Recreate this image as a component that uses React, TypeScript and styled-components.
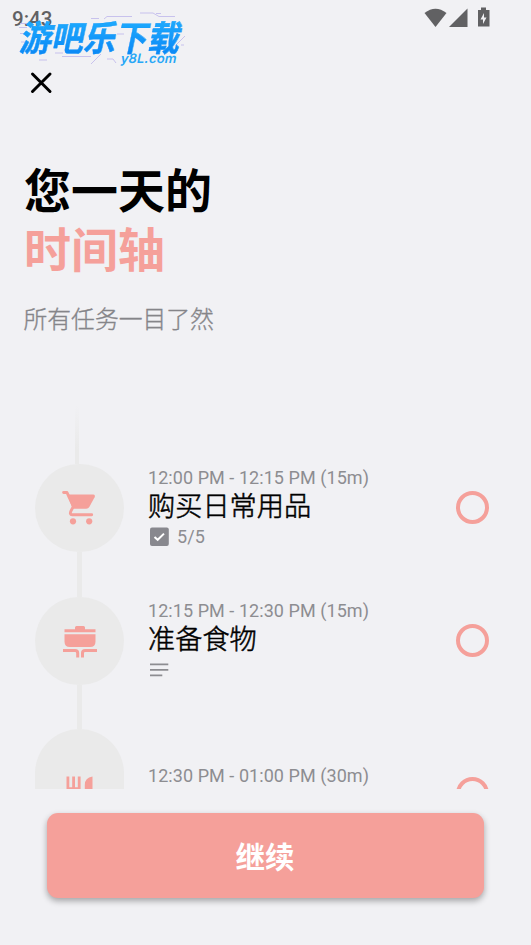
import React from "react";
import styled, { createGlobalStyle } from "styled-components";

const CORAL = "#f5a09a";
const GREY = "#8d8d91";
const DISC = "#eaeaea";

const GlobalStyle = createGlobalStyle`
  * { box-sizing: border-box; }
  body {
    margin: 0;
    background: #f1f1f4;
    font-family: Roboto, "Noto Sans CJK SC", sans-serif;
  }
`;

const Screen = styled.main`
  position: relative;
  display: flex;
  flex-direction: column;
  width: 531px;
  height: 945px;
  overflow: hidden;
  background: #f1f1f4;
`;

const StatusBar = styled.header`
  display: flex;
  justify-content: space-between;
  height: 40px;
  padding: 7px 41px 0 12px;
  color: #616163;
`;

const Clock = styled.span`
  font-size: 20.5px;
  line-height: 24px;
  font-weight: 500;
`;

const StatusIcons = styled.svg`
  width: 66px;
  height: 22px;
`;

const Watermark = styled.div`
  position: absolute;
  left: 15px;
  top: 8px;
  width: 175px;
  height: 60px;
`;

const Traces = styled.svg`
  position: absolute;
  inset: 0;
  width: 175px;
  height: 60px;
`;

const BrandName = styled.span`
  position: absolute;
  left: 7px;
  top: 9px;
  font: 700 32px/38px "Noto Sans CJK SC", sans-serif;
  white-space: nowrap;
  color: transparent;
  background: linear-gradient(#20b0ff, #0a86f5);
  background-clip: text;
  -webkit-text-stroke: 0.3px #1498fa;
  transform: skewX(-12deg) scaleY(1.1);
`;

const BrandSite = styled.span`
  position: absolute;
  left: 106px;
  top: 42px;
  font: 600 13px/16px Inter, sans-serif;
  letter-spacing: 0.2px;
  color: #27a7f7;
  transform: skewX(-12deg);
`;

const CloseButton = styled.button`
  width: 24px;
  height: 24px;
  margin: 31px 0 0 29px;
  padding: 0;
  border: 0;
  background: none;
  svg { display: block; }
`;

const Heading = styled.h1`
  margin: 68px 0 0 24px;
  font-size: 47px;
  line-height: 58.5px;
  font-weight: 700;
  color: #000;
`;

const Accent = styled.span`
  display: block;
  color: ${CORAL};
`;

const Subtitle = styled.p`
  margin: 23px 0 0 23.5px;
  font-size: 23.8px;
  line-height: 34px;
  font-weight: 300;
  color: #858589;
  -webkit-text-stroke: 0.35px #858589;
`;

const Timeline = styled.section`
  height: 384px;
  margin-top: 68px;
  padding: 0 42.5px 0 35px;
  overflow: hidden;
`;

const LeadLine = styled.div`
  width: 4px;
  height: 58.7px;
  margin-left: 40px;
  background: linear-gradient(rgba(234, 234, 234, 0), ${DISC} 75%);
`;

const Entry = styled.article<{ $tall?: boolean }>`
  display: flex;
  height: ${(p) => (p.$tall ? 172 : 132.85)}px;
`;

const Rail = styled.div`
  display: flex;
  flex-direction: column;
  align-items: center;
  width: 89px;
  margin-right: 24px;
`;

const Disc = styled.div<{ $tall?: boolean }>`
  display: flex;
  flex: none;
  align-items: center;
  justify-content: center;
  width: 89px;
  height: ${(p) => (p.$tall ? 128 : 88.6)}px;
  border-radius: 44.5px;
  background: ${DISC};
`;

const Connector = styled.div`
  flex: 1;
  width: 4.5px;
  background: ${DISC};
`;

const Details = styled.div<{ $tall?: boolean }>`
  flex: 1;
  padding-top: ${(p) => (p.$tall ? 36 : 3)}px;
`;

const Time = styled.div`
  font-size: 18px;
  line-height: 22px;
  letter-spacing: 0.06px;
  color: ${GREY};
`;

const TaskName = styled.div`
  margin-top: 1px;
  font-size: 27.2px;
  line-height: 34px;
  font-weight: 300;
  color: #000;
  -webkit-text-stroke: 0.5px #000;
`;

const Meta = styled.div`
  display: flex;
  align-items: center;
  gap: 8px;
  height: 26px;
  font-size: 18px;
  letter-spacing: 0.1px;
  color: ${GREY};
`;

const Ring = styled.div<{ $tall?: boolean }>`
  width: 33px;
  height: 33px;
  margin-top: ${(p) => (p.$tall ? 47.2 : 27.7)}px;
  border: 4px solid ${CORAL};
  border-radius: 50%;
`;

const ContinueButton = styled.button`
  width: 437px;
  height: 85px;
  margin: 24px 0 0 47px;
  padding: 0 1px 0 0;
  border: 0;
  border-radius: 11px;
  background: ${CORAL};
  color: #fff;
  font: 700 29.5px/85px "Noto Sans CJK SC", sans-serif;
  box-shadow: 0 3px 6px rgba(0, 0, 0, 0.32);
`;

const CartIcon = () => (
  <svg width="36" height="36" viewBox="1.3 0.7 36 36" fill={CORAL}>
    <path d="M2.9 3.2H6.3L8.5 8L12.7 17L10.2 21.8Q8.7 25.3 11.5 25.5H31" fill="none" stroke={CORAL} strokeWidth="2.9" strokeLinecap="round" strokeLinejoin="round" />
    <path d="M6.5 5.3H32.5Q35 5.7 33.9 8L28.6 17.6Q27.6 19.4 25.6 19.4H12Z" />
    <circle cx="12.3" cy="32" r="3.1" />
    <circle cx="28.5" cy="32" r="3.1" />
  </svg>
);

const PotIcon = () => (
  <svg width="36" height="34" viewBox="0 0 36 34" fill={CORAL}>
    <path d="M2.5 8.2V5.2H13V3.5Q13 2 14.5 2H21.5Q23 2 23 3.5V5.2H33.5V8.2ZM2.5 10.2H33.5V17.5Q33.5 23 28 23H8Q2.5 23 2.5 17.5Z" />
    <path d="M1 26.5H13Q15.7 26.5 15.7 29V33.5M35 26.5H23.2Q20.5 26.5 20.5 29V33.5" fill="none" stroke={CORAL} strokeWidth="3" />
  </svg>
);

const CutleryIcon = () => (
  <svg width="36" height="34" viewBox="0 0 36 34" fill={CORAL}>
    <path d="M4.5 0.5H7.3V11.2H10.2V0.5H13V11.2H15.8V0.5H18.6V14Q18.6 18 13.5 19V34H9.5V19Q4.5 18 4.5 14Z" />
    <path d="M30.5 0.5V34H26.5V19H22.8V9Q22.8 1.5 30.5 0.5Z" />
  </svg>
);

const CheckIcon = () => (
  <svg width="21" height="20" viewBox="0 0 21 20">
    <rect x="2" y="0.6" width="18.8" height="18.5" rx="2" fill="#88888e" />
    <path d="M6.5 9.9L9.7 12.8L16 6.6" fill="none" stroke="#fff" strokeWidth="2" />
  </svg>
);

const NotesIcon = () => (
  <svg width="21" height="20" viewBox="0 0 21 20">
    <path d="M2 4.3H20.3M2 9.8H20.3M2 15.3H14.3" fill="none" stroke={GREY} strokeWidth="1.7" />
  </svg>
);

const tasks = [
  { time: "12:00 PM - 12:15 PM (15m)", name: "购买日常用品", icon: <CartIcon />, meta: <><CheckIcon />5/5</>, tall: false },
  { time: "12:15 PM - 12:30 PM (15m)", name: "准备食物", icon: <PotIcon />, meta: <NotesIcon />, tall: false },
  { time: "12:30 PM - 01:00 PM (30m)", name: "", icon: <CutleryIcon />, meta: null, tall: true },
];

export default function App() {
  return (
    <Screen>
      <GlobalStyle />
      <StatusBar>
        <Clock>9:43</Clock>
        <StatusIcons viewBox="0 0 66 22" fill="#616163">
          <path d="M0.5 6Q11.5-2.5 22.5 6L11.5 20Z" />
          <path d="M43.5 1.5V20H25Z" />
          <path fillRule="evenodd" d="M54 3H57V0.5H62V3H65.5V19.5H54ZM60 6L56.5 12.5H59V17L62.5 10.5H60Z" />
        </StatusIcons>
      </StatusBar>
      <Watermark>
        <Traces viewBox="0 0 175 60" fill="none" stroke="#c3bcec" strokeWidth="0.9">
          <path d="M76 10.5H84M89 11L92 8.5H117M125 5H138L144 8.5H160M141 5.5H146M5 15.5H14M4 19.5H12M5 25.5H10M6 34H14M40 45H48M47 48.5H76M76 56L86 46M24 52H32M92 51H98L101 55M102 26H109M160 38L170 28M166 37H169" />
        </Traces>
        <BrandName>游吧乐下载</BrandName>
        <BrandSite>y8L.com</BrandSite>
      </Watermark>
      <CloseButton aria-label="关闭">
        <svg width="24" height="24" viewBox="0 0 24 24" fill="none" stroke="#000" strokeWidth="3" strokeLinecap="round">
          <path d="M3.5 3L21 20.5M21 3L3.5 20.5" />
        </svg>
      </CloseButton>
      <Heading>
        您一天的
        <Accent>时间轴</Accent>
      </Heading>
      <Subtitle>所有任务一目了然</Subtitle>
      <Timeline>
        <LeadLine />
        {tasks.map((task) => (
          <Entry key={task.time} $tall={task.tall}>
            <Rail>
              <Disc $tall={task.tall}>{task.icon}</Disc>
              <Connector />
            </Rail>
            <Details $tall={task.tall}>
              <Time>{task.time}</Time>
              <TaskName>{task.name}</TaskName>
              <Meta>{task.meta}</Meta>
            </Details>
            <Ring $tall={task.tall} />
          </Entry>
        ))}
      </Timeline>
      <ContinueButton>继续</ContinueButton>
    </Screen>
  );
}
